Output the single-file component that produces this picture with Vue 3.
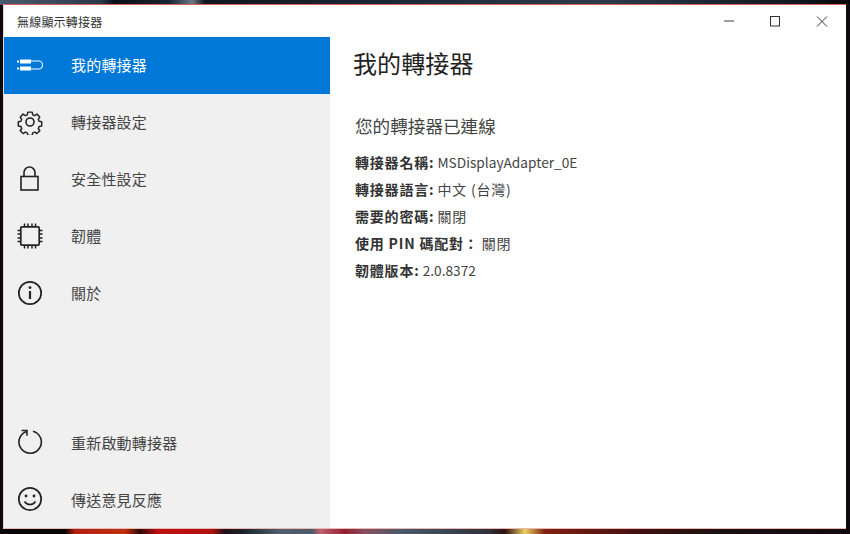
<script setup>
const details = [
  { label: '轉接器名稱:', value: 'MSDisplayAdapter_0E', cjk: false },
  { label: '轉接器語言:', value: '中文 (台灣)', cjk: true },
  { label: '需要的密碼:', value: '關閉', cjk: true },
  { label: '使用 PIN 碼配對：', value: '關閉', cjk: true },
  { label: '韌體版本:', value: '2.0.8372', cjk: false },
]
</script>

<template>
  <div class="desktop">
    <div class="window">
      <header class="titlebar">
        <span class="app-title">無線顯示轉接器</span>
        <div class="controls">
          <svg class="ctl" width="46" height="33" viewBox="0 0 46 33"><path d="M17 16h10" stroke="#777" stroke-width="1.4" fill="none"/></svg>
          <svg class="ctl" width="46" height="33" viewBox="0 0 46 33"><rect x="17.5" y="11.5" width="9" height="9.5" stroke="#333" stroke-width="1" fill="none"/></svg>
          <svg class="ctl" width="46" height="33" viewBox="0 0 46 33"><path d="M18 11.5l10 10M28 11.5l-10 10" stroke="#333" stroke-width="1" fill="none"/></svg>
        </div>
      </header>
      <div class="body">
        <nav class="nav">
          <div class="group">
            <div class="item active">
              <svg class="icon" width="26" height="26" viewBox="0 0 26 26" fill="none">
                <path d="M0 9.5h2M0 16.5h2" stroke="#fff" stroke-width="2"/>
                <rect x="3" y="7.5" width="11" height="4" fill="#fff"/>
                <rect x="3" y="14.5" width="11" height="4" fill="#fff"/>
                <path d="M14 9h7.5a4 4 0 0 1 0 8H14" stroke="#fff" stroke-width="1.1"/>
              </svg>
              <span>我的轉接器</span>
            </div>
            <div class="item">
              <svg class="icon" width="26" height="26" viewBox="0 0 26 26" fill="none" stroke="#222" stroke-width="1.6" stroke-linejoin="round">
                <path d="M10.6 2h4.8l.6 3 2.2.9 2.6-1.7 3.1 3.4-1.7 2.4.9 2.2 2.9.6v4.6l-2.9.6-.9 2.2 1.7 2.5-3.2 3.2-2.5-1.7-2.2.9-.6 2.9h-4.8l-.6-2.9-2.2-.9-2.5 1.7-3.2-3.2 1.7-2.5-.9-2.2-2.9-.6v-4.6l2.9-.6.9-2.2-1.7-2.4 3.1-3.4 2.6 1.7 2.2-.9z" transform="translate(1.3 1.3) scale(.9)"/>
                <circle cx="13" cy="13" r="4"/>
              </svg>
              <span>轉接器設定</span>
            </div>
            <div class="item">
              <svg class="icon" width="26" height="26" viewBox="0 0 26 26" fill="none" stroke="#222" stroke-width="1.6">
                <rect x="4" y="10.5" width="17" height="13.5"/>
                <path d="M7 10.5V6.5a5.5 5.5 0 0 1 11 0v4"/>
              </svg>
              <span>安全性設定</span>
            </div>
            <div class="item">
              <svg class="icon" width="26" height="26" viewBox="0 0 26 26" fill="none" stroke="#222" stroke-width="1.5">
                <rect x="3.8" y="3.8" width="18.4" height="18.4" rx="1.2" stroke-width="1.7"/>
                <path d="M7.5 0.5v3M11 0.5v3M15 0.5v3M18.5 0.5v3M7.5 22.5v3M11 22.5v3M15 22.5v3M18.5 22.5v3M.5 7.5h3M.5 11h3M.5 15h3M.5 18.5h3M22.5 7.5h3M22.5 11h3M22.5 15h3M22.5 18.5h3"/>
              </svg>
              <span>韌體</span>
            </div>
            <div class="item">
              <svg class="icon" width="26" height="26" viewBox="0 0 26 26" fill="none" stroke="#222" stroke-width="1.7">
                <circle cx="13" cy="13" r="11.2"/>
                <path d="M13 11v8" stroke-width="2.2"/>
                <circle cx="13" cy="7.6" r="1.4" fill="#222" stroke="none"/>
              </svg>
              <span>關於</span>
            </div>
          </div>
          <div class="group lower">
            <div class="item">
              <svg class="icon" width="26" height="26" viewBox="0 0 26 26" fill="none" stroke="#222" stroke-width="1.6">
                <path d="M16 2.2A11.2 11.2 0 1 1 9.6 2.4"/>
                <path d="M4.6 1.4H10V6.8" stroke-width="1.5"/>
              </svg>
              <span>重新啟動轉接器</span>
            </div>
            <div class="item">
              <svg class="icon" width="26" height="26" viewBox="0 0 26 26" fill="none" stroke="#222" stroke-width="1.7">
                <circle cx="13" cy="13" r="11.2"/>
                <circle cx="9" cy="10" r="1.4" fill="#222" stroke="none"/>
                <circle cx="17" cy="10" r="1.4" fill="#222" stroke="none"/>
                <path d="M7.5 15.5c2.5 4 8.5 4 11 0" stroke-width="1.5"/>
              </svg>
              <span>傳送意見反應</span>
            </div>
          </div>
        </nav>
        <main class="content">
          <h1>我的轉接器</h1>
          <h2>您的轉接器已連線</h2>
          <p v-for="d in details" :key="d.label" class="row"><b>{{ d.label }}</b> <span :class="{ cjk: d.cjk }">{{ d.value }}</span></p>
        </main>
      </div>
    </div>
  </div>
</template>

<style scoped>
.desktop {
  width: 850px;
  height: 534px;
  box-sizing: border-box;
  padding: 4px 4px 5px 3px;
  overflow: hidden;
  background:
    linear-gradient(to right, #4a5a6e 0, #3a4a5c 55px, #2a3a4a 100px, #0a0f16 115px, #1a2634 170px, #6a7888 192px, #10161e 205px, #1c2a38 400px, #2c3c4c 600px, #0f1820 800px, #050505 850px) top / 100% 5px no-repeat,
    linear-gradient(to right, #0a0505 0, #0a0505 65px, #b02010 75px, #c03010 125px, #300808 140px, #c01010 158px, #b01010 212px, #1a1014 225px, #20242c 245px, #50606e 280px, #4a5a68 312px, #c06070 320px, #902030 345px, #8a5060 365px, #4a5a68 400px, #30303a 490px, #301010 505px, #e8d060 525px, #802010 545px, #401010 640px, #1a1012 720px, #100a0c 850px) bottom / 100% 5px no-repeat,
    #0c0a0e;
  font-family: "Noto Sans CJK TC", "Noto Sans", sans-serif;
}
.window {
  width: 843px;
  height: 525px;
  box-sizing: border-box;
  border-top: 1px solid #d9605a;
  border-bottom: 1px solid #e8b8b4;
  border-left: 1px solid #f0d0cc;
  background: #fff;
  display: flex;
  flex-direction: column;
}
.titlebar {
  height: 32px;
  flex: none;
  display: flex;
  align-items: center;
  justify-content: space-between;
}
.app-title {
  margin-left: 13px;
  font-size: 12px;
  letter-spacing: .2px;
  color: #333;
}
.controls { display: flex; margin-right: 1px; margin-top: 1px; }
.ctl { display: block; }
.body { flex: 1; display: flex; min-height: 0; }
.nav {
  width: 326px;
  flex: none;
  background: #f0f0f0;
  display: flex;
  flex-direction: column;
  justify-content: space-between;
}
.item {
  height: 57px;
  box-sizing: border-box;
  padding-bottom: 2px;
  display: flex;
  align-items: center;
  padding-left: 12.5px;
  font-size: 15px;
  color: #444;
}
.item span { margin-left: 28.5px; letter-spacing: .2px; }
.lower .item span { margin-top: 2px; }
.item.active {
  background: #0078d7;
  color: #fff;
}
.icon { flex: none; }
.content { flex: 1; padding: 8px 0 0 23px; color: #222; }
h1 {
  margin: 0;
  font-size: 24px;
  font-weight: 400;
  letter-spacing: .1px;
  line-height: 36px;
  color: #222;
}
h2 {
  margin: 31px 0 9px 2px;
  font-size: 17.6px;
  font-weight: 400;
  line-height: 28px;
  color: #444;
}
.row {
  margin: 0 0 0 2px;
  height: 27px;
  line-height: 27px;
  font-size: 13.7px;
  color: #444;
  white-space: pre-wrap;
}
.row b { font-size: 14px; font-weight: 700; letter-spacing: .8px; color: #333; }
.row .cjk { font-size: 14px; letter-spacing: .8px; }
</style>
